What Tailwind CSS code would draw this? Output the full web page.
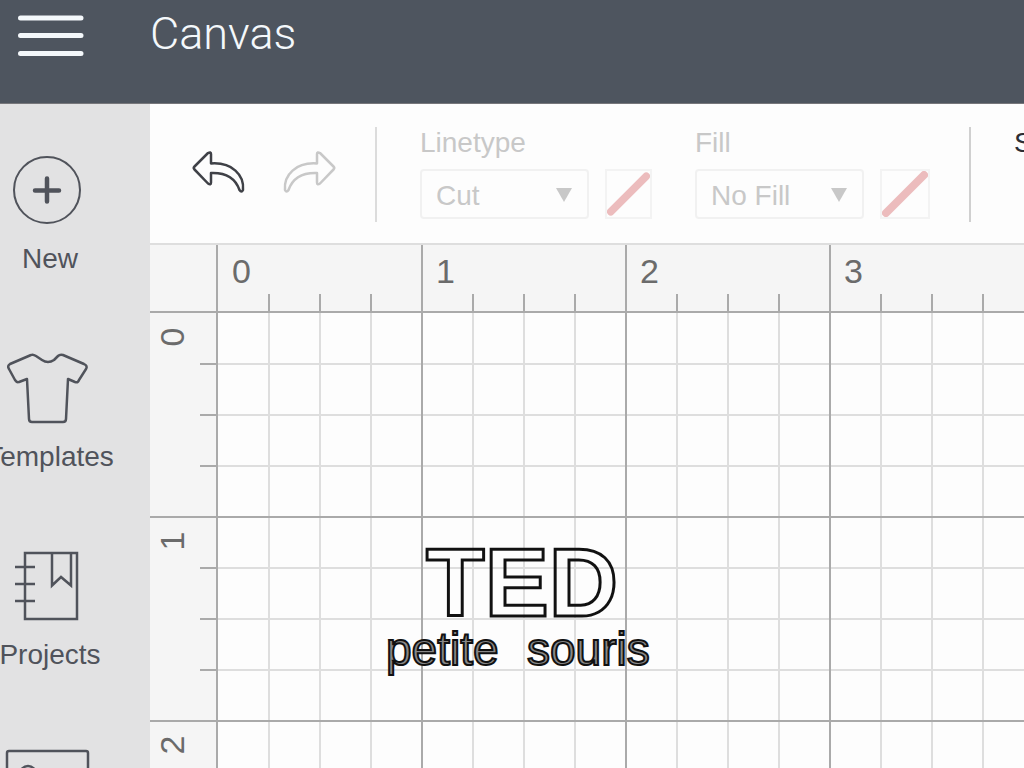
<!DOCTYPE html>
<html lang="en">
<head>
    <meta charset="UTF-8">
    <meta name="viewport" content="width=device-width, initial-scale=1.0">
    <title>Canvas</title>
    <script src="https://cdn.jsdelivr.net/npm/@tailwindcss/browser@4"></script>
</head>
<body class="h-screen flex flex-col overflow-hidden bg-[#fdfdfd] font-['Liberation_Sans',Arial,sans-serif] text-[28px] leading-9 text-[#50535b]">
    <!-- Header -->
    <header class="h-[104px] shrink-0 flex items-start bg-[#4e555f] border-b border-[#77777b] text-[#f4f8fb]">
        <button type="button" aria-label="Menu" class="w-[150px] pt-3 pl-4">
            <svg class="w-[70px] h-12" viewBox="0 0 70 48" fill="none" stroke="currentColor" stroke-width="5" stroke-linecap="round">
                <path d="M4.500 6H65M4.500 23.500H65M4.500 41.500H65"/>
            </svg>
        </button>
        <h1 class="pt-2 font-[Roboto,sans-serif] font-light text-[45px] leading-[52px]">Canvas</h1>
    </header>

    <div class="flex flex-1 min-h-0">
        <!-- Sidebar -->
        <nav class="w-[150px] shrink-0 bg-[#e2e2e3] overflow-hidden">
            <div class="w-[100px] pt-[46px] flex flex-col items-center gap-[71px]">
                <button type="button" class="flex flex-col items-center gap-[11px]">
                    <svg class="w-[100px] h-20" viewBox="0 0 100 80" fill="none" stroke="currentColor" stroke-linecap="round">
                        <circle cx="47" cy="40" r="33" stroke-width="2"/>
                        <path d="M47 28.500v23M35 40.500h24" stroke-width="4.500"/>
                    </svg>
                    <span>New</span>
                </button>
                <button type="button" class="flex flex-col items-center gap-[11px]">
                    <svg class="w-[100px] h-20" viewBox="0 0 100 80" fill="none" stroke="currentColor" stroke-width="2.500" stroke-linejoin="round">
                        <path d="M31 7Q33 6 36 8L42 12Q48 16 54 12Q56 10 58 8Q60 6 63 7L84 16Q88 18 86 21L79 32Q78 35 75 34L68 31L66 71Q66 74 63 74H32Q29 74 29 71L27 31L19 34Q17 35 15 32L9 21Q7 18 10 16Z"/>
                    </svg>
                    <span>Templates</span>
                </button>
                <button type="button" class="flex flex-col items-center gap-[11px]">
                    <svg class="w-[100px] h-20" viewBox="0 0 100 80" fill="none" stroke="currentColor" stroke-width="2.500">
                        <path d="M25 7H77V73H25ZM15 21H35M15 38H35M15 55H35M52 7V39.500L61 31L71 39.500V7"/>
                    </svg>
                    <span>Projects</span>
                </button>
                <button type="button" class="flex flex-col items-center gap-[11px]">
                    <svg class="w-[100px] h-20" viewBox="0 0 100 80" fill="none" stroke="currentColor" stroke-width="2.500">
                        <rect x="7" y="7" width="81" height="66" rx="2"/>
                        <circle cx="28" cy="30" r="8"/>
                        <path d="M7 63L34 44L50 56L68 36L88 58"/>
                    </svg>
                    <span>Images</span>
                </button>
            </div>
        </nav>

        <main class="flex-1 min-w-0 flex flex-col overflow-hidden">
            <!-- Toolbar -->
            <div class="h-[141px] shrink-0 flex items-start pt-[23px] border-b-2 border-[#dedede] text-[#c8c8c8]">
                <div class="w-[227px] h-[95px] shrink-0 flex items-start pt-5 gap-8 pl-10 border-r-2 border-[#dcdcdc]">
                    <button type="button" aria-label="Undo" class="text-[#3f4147]">
                        <svg class="w-[58px] h-12" viewBox="0 0 58 48" fill="none" stroke="currentColor" stroke-width="2.500" stroke-linejoin="round">
                            <path d="M4.500 19.500Q3 21 4.500 22.500L18 36.500Q21 38.500 21 35.500V26C34 25.500 45 30 49.500 43Q51.500 46 53 43C54.500 28 42 15 21 16.500V7Q21 4.500 18 6Z"/>
                        </svg>
                    </button>
                    <button type="button" aria-label="Redo" disabled>
                        <svg class="w-[58px] h-12" viewBox="0 0 58 48" fill="none" stroke="currentColor" stroke-width="2.500" stroke-linejoin="round">
                            <path d="M53.500 19.500Q55 21 53.500 22.500L40 36.500Q37 38.500 37 35.500V26C24 25.500 13 30 8.500 43Q6.500 46 5 43C3.500 28 16 15 37 16.500V7Q37 4.500 40 6Z"/>
                        </svg>
                    </button>
                </div>
                <div class="w-[275px] shrink-0 pl-[43px]">
                    <label for="linetype" class="block -mt-[2px] mb-2">Linetype</label>
                    <div class="flex gap-4">
                        <div class="relative">
                            <select id="linetype" disabled class="appearance-none w-[169px] h-[50px] pl-[14px] pt-1 border-2 border-[#f1f1f1] rounded-sm bg-transparent opacity-100">
                                <option>Cut</option>
                            </select>
                            <svg class="absolute right-4 top-[18px] w-[18px] h-4 pointer-events-none" viewBox="0 0 18 16" fill="currentColor"><path d="M1 1H17L9 15Z"/></svg>
                        </div>
                        <button type="button" aria-label="Linetype color" disabled class="w-[50px] h-[50px] border-2 border-[#f3f3f3]">
                            <svg class="size-full" viewBox="0 0 46 46" stroke="#ecbcbd" stroke-width="8" stroke-linecap="round"><path d="M4 42L42 4"/></svg>
                        </button>
                    </div>
                </div>
                <div class="w-[319px] h-[95px] shrink-0 pl-[43px] border-r-2 border-[#d0d0d0]">
                    <label for="fill" class="block -mt-[2px] mb-2">Fill</label>
                    <div class="flex gap-4">
                        <div class="relative">
                            <select id="fill" disabled class="appearance-none w-[169px] h-[50px] pl-[14px] pt-1 border-2 border-[#f1f1f1] rounded-sm bg-transparent opacity-100">
                                <option>No Fill</option>
                            </select>
                            <svg class="absolute right-4 top-[18px] w-[18px] h-4 pointer-events-none" viewBox="0 0 18 16" fill="currentColor"><path d="M1 1H17L9 15Z"/></svg>
                        </div>
                        <button type="button" aria-label="Fill color" disabled class="w-[50px] h-[50px] border-2 border-[#f3f3f3]">
                            <svg class="size-full" viewBox="0 0 46 46" stroke="#ecbcbd" stroke-width="8" stroke-linecap="round"><path d="M4 42L42 4"/></svg>
                        </button>
                    </div>
                </div>
                <button type="button" class="shrink-0 -mt-[2px] pl-[43px] text-[#2c2e34]">Select All</button>
            </div>

            <!-- Rulers and mat -->
            <div class="flex-1 min-h-0 grid grid-cols-[68px_minmax(0,1fr)] grid-rows-[68px_minmax(0,1fr)] text-[34px] text-[#6b6b6b]">
                <div class="bg-[#f5f5f5] border-r-2 border-b-2 border-[#aaa]"></div>
                <div class="relative flex overflow-hidden bg-[#f5f5f5] border-b-2 border-[#aaa]">
                    <svg class="absolute inset-0 size-full" aria-hidden="true">
                        <defs>
                            <pattern id="ticks-x" x="-1" width="204" height="66" patternUnits="userSpaceOnUse">
                                <path d="M1 0V66M52 49V66M103 49V66M154 49V66" stroke="#aaa" stroke-width="2"/>
                            </pattern>
                        </defs>
                        <rect x="1" width="100%" height="66" fill="url(#ticks-x)"/>
                    </svg>
                    <span class="relative w-[204px] shrink-0 pl-[14px] pt-2">0</span>
                    <span class="relative w-[204px] shrink-0 pl-[14px] pt-2">1</span>
                    <span class="relative w-[204px] shrink-0 pl-[14px] pt-2">2</span>
                    <span class="relative w-[204px] shrink-0 pl-[14px] pt-2">3</span>
                </div>
                <div class="relative flex flex-col overflow-hidden bg-[#f5f5f5] border-r-2 border-[#aaa]">
                    <svg class="absolute inset-0 size-full" aria-hidden="true">
                        <defs>
                            <pattern id="ticks-y" y="-1" width="66" height="204" patternUnits="userSpaceOnUse">
                                <path d="M0 1H66M50 52H66M50 103H66M50 154H66" stroke="#aaa" stroke-width="2"/>
                            </pattern>
                        </defs>
                        <rect y="1" width="66" height="100%" fill="url(#ticks-y)"/>
                    </svg>
                    <div class="relative h-[204px] shrink-0 pl-1 pt-[6px]"><span class="block size-9 text-center -rotate-90">0</span></div>
                    <div class="relative h-[204px] shrink-0 pl-1 pt-[6px]"><span class="block size-9 text-center -rotate-90">1</span></div>
                    <div class="relative h-[204px] shrink-0 pl-1 pt-[6px]"><span class="block size-9 text-center -rotate-90">2</span></div>
                </div>
                <svg class="size-full">
                    <defs>
                        <pattern id="mat" width="204" height="204" patternUnits="userSpaceOnUse">
                            <path d="M51 0V204M102 0V204M153 0V204M0 51H204M0 102H204M0 153H204" stroke="#dedede" stroke-width="2"/>
                        </pattern>
                        <pattern id="mat-cols" x="-1" width="204" height="204" patternUnits="userSpaceOnUse">
                            <path d="M1 0V204" stroke="#aaa" stroke-width="2"/>
                        </pattern>
                        <pattern id="mat-rows" y="-1" width="204" height="204" patternUnits="userSpaceOnUse">
                            <path d="M0 1H204" stroke="#aaa" stroke-width="2"/>
                        </pattern>
                    </defs>
                    <rect width="100%" height="100%" fill="url(#mat)"/>
                    <!-- the ruler borders already draw the first line of each direction -->
                    <rect x="1" width="100%" height="100%" fill="url(#mat-cols)"/>
                    <rect y="1" width="100%" height="100%" fill="url(#mat-rows)"/>
                    <text x="208" y="303" font-size="96" font-weight="bold" fill="none" stroke="#111" stroke-width="3">TED</text>
                    <text x="168" y="352" font-size="46" fill="#888" stroke="#111" stroke-width="2">petite</text>
                    <text x="309" y="352" font-size="46" fill="#888" stroke="#111" stroke-width="2">souris</text>
                </svg>
            </div>
        </main>
    </div>
</body>
</html>
